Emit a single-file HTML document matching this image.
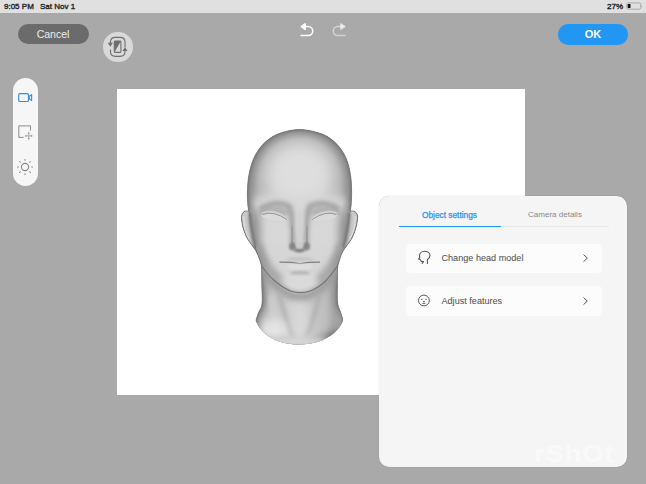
<!DOCTYPE html>
<html><head><meta charset="utf-8">
<style>
*{margin:0;padding:0;box-sizing:border-box}
html,body{width:646px;height:484px;overflow:hidden;background:#a9a9a9;font-family:"Liberation Sans",sans-serif}
.abs{position:absolute}
#status{left:0;top:0;width:646px;height:12.5px;background:#e0e0e0;font-size:8px;color:#222;-webkit-text-stroke:0.35px #222}
#cancel{left:17.5px;top:24px;width:71px;height:20px;border-radius:10px;background:#6b6b6b;color:#eee;font-size:10.5px;text-align:center;line-height:20px}
#ok{left:558px;top:24px;width:70px;height:20.5px;border-radius:10px;background:#2196f3;color:#fff;font-size:11px;text-align:center;line-height:20.5px;font-weight:bold}
#rot{left:103px;top:32px;width:29.5px;height:29.5px;border-radius:50%;background:#d9d9d9}
#tool{left:13px;top:78px;width:25px;height:108px;border-radius:12.5px;background:#f6f6f6}
#canvas{left:117px;top:89px;width:408px;height:306px;background:#fff}
#panel{left:379px;top:196px;width:247.5px;height:271px;border-radius:10px;background:#f5f5f5;box-shadow:0 0 1px rgba(0,0,0,0.35)}
.row{position:absolute;left:27px;width:195.5px;height:29.5px;background:#fcfcfc;border-radius:4px;font-size:9.1px;color:#4a4a4a}
</style></head><body>
<div id="status" class="abs">
  <span class="abs" style="left:4px;top:1.5px">9:05 PM</span>
  <span class="abs" style="left:40px;top:1.5px">Sat Nov 1</span>
  <span class="abs" style="left:607px;top:1.5px">27%</span>
</div>
<div id="cancel" class="abs">Cancel</div>
<div id="rot" class="abs"></div>
<div id="ok" class="abs">OK</div>
<div id="tool" class="abs"></div>
<div id="canvas" class="abs"></div>
<div id="panel" class="abs">
  <div class="abs" style="left:19.5px;top:13.5px;width:102px;text-align:center;font-size:8.3px;color:#2196f3;-webkit-text-stroke:0.25px #2196f3">Object settings</div>
  <div class="abs" style="left:124px;top:13.5px;width:104px;text-align:center;font-size:8px;color:#888">Camera details</div>
  <div class="abs" style="left:19.5px;top:29.5px;width:102px;height:1.5px;background:#2196f3"></div>
  <div class="abs" style="left:121.5px;top:30px;width:108px;height:1px;background:#e9e9e9"></div>
  <div class="row" style="top:47.5px"><span class="abs" style="left:35.5px;top:9.5px">Change head model</span></div>
  <div class="abs" style="left:155px;top:243px;font-size:28px;font-weight:bold;color:#fff;opacity:0.45;letter-spacing:0.5px;line-height:28px;overflow:hidden;width:92px;height:26px;transform:scaleY(0.85);transform-origin:0 100%">rShOt</div>
  <div class="row" style="top:90.3px"><span class="abs" style="left:35.5px;top:9.5px">Adjust features</span></div>
</div>

<svg class="abs" style="left:0;top:0" width="646" height="484" viewBox="0 0 646 484">
<defs>
 <clipPath id="hc"><path d="M 299.5 129.5 C 307.1 129.5 316.4 131.8 322.7 134.3 C 329.0 136.8 333.2 140.5 337.2 144.6 C 341.1 148.7 344.2 153.9 346.4 159.1 C 348.6 164.3 349.7 170.1 350.6 175.6 C 351.5 181.1 351.5 187.4 351.6 192.1 C 351.7 196.8 351.3 200.9 351.2 204.0 C 351.1 207.1 350.3 209.4 350.8 210.6 C 351.3 211.8 353.1 210.4 354.2 211.2 C 355.3 212.0 357.2 213.0 357.6 215.5 C 358.0 218.0 357.2 222.4 356.4 226.0 C 355.5 229.6 354.1 233.7 352.5 237.0 C 350.9 240.3 348.2 243.5 346.5 246.0 C 344.8 248.5 343.7 249.7 342.5 252.0 C 341.3 254.3 340.3 257.3 339.5 260.0 C 338.7 262.7 338.0 263.8 337.6 268.0 C 337.2 272.2 337.4 279.2 337.4 285.0 C 337.4 290.8 337.0 298.3 337.6 303.0 C 338.2 307.7 340.0 309.8 340.8 313.0 C 341.6 316.2 343.3 318.7 342.2 322.0 C 341.1 325.3 337.9 329.7 334.0 333.0 C 330.1 336.3 324.6 339.7 318.8 341.6 C 313.1 343.5 306.0 344.6 299.5 344.6 C 293.0 344.6 285.4 343.7 279.7 341.8 C 273.9 339.9 268.9 336.6 265.0 333.4 C 261.1 330.2 257.8 325.7 256.6 322.5 C 255.4 319.3 257.1 317.1 258.0 314.0 C 258.9 310.9 261.4 308.8 262.0 304.0 C 262.6 299.2 261.9 291.0 261.8 285.0 C 261.7 279.0 261.9 272.2 261.6 268.0 C 261.3 263.8 260.7 262.7 259.8 260.0 C 258.9 257.3 257.7 254.3 256.5 252.0 C 255.3 249.7 254.2 248.5 252.5 246.0 C 250.8 243.5 248.2 240.3 246.6 237.0 C 244.9 233.7 243.4 229.6 242.6 226.0 C 241.8 222.4 241.2 218.0 241.6 215.5 C 242.0 213.0 243.7 212.0 244.8 211.2 C 245.9 210.4 247.7 211.8 248.2 210.6 C 248.7 209.4 247.9 207.1 247.8 204.0 C 247.7 200.9 247.2 196.8 247.4 192.1 C 247.6 187.4 247.8 181.1 248.8 175.6 C 249.8 170.1 251.2 164.3 253.5 159.1 C 255.8 153.9 258.8 148.7 262.8 144.6 C 266.8 140.5 271.2 136.8 277.3 134.3 C 283.4 131.8 291.9 129.5 299.5 129.5 Z"/></clipPath>
 <filter id="b05" x="-50%" y="-50%" width="200%" height="200%"><feGaussianBlur stdDeviation="0.5"/></filter><filter id="b1" x="-50%" y="-50%" width="200%" height="200%"><feGaussianBlur stdDeviation="1"/></filter><filter id="b15" x="-50%" y="-50%" width="200%" height="200%"><feGaussianBlur stdDeviation="1.5"/></filter><filter id="b2" x="-50%" y="-50%" width="200%" height="200%"><feGaussianBlur stdDeviation="2"/></filter><filter id="b3" x="-50%" y="-50%" width="200%" height="200%"><feGaussianBlur stdDeviation="3"/></filter><filter id="b4" x="-50%" y="-50%" width="200%" height="200%"><feGaussianBlur stdDeviation="4"/></filter><filter id="b5" x="-50%" y="-50%" width="200%" height="200%"><feGaussianBlur stdDeviation="5"/></filter><filter id="b8" x="-50%" y="-50%" width="200%" height="200%"><feGaussianBlur stdDeviation="8"/></filter>
 <radialGradient id="skull" cx="0" cy="0" r="1" gradientUnits="userSpaceOnUse" gradientTransform="translate(299.5 182) scale(56 62)">
  <stop offset="0" stop-color="#dcdcdc"/><stop offset="0.4" stop-color="#d4d4d4"/><stop offset="0.7" stop-color="#bababa"/><stop offset="0.9" stop-color="#9a9a9a"/><stop offset="1" stop-color="#8a8a8a"/>
 </radialGradient>
 <linearGradient id="neckg" x1="256" y1="0" x2="343" y2="0" gradientUnits="userSpaceOnUse">
  <stop offset="0" stop-color="#b8b8b8"/><stop offset="0.2" stop-color="#c8c8c8"/><stop offset="0.5" stop-color="#d4d4d4"/><stop offset="0.8" stop-color="#bdbdbd"/><stop offset="1" stop-color="#9c9c9c"/>
 </linearGradient>
</defs>
<g clip-path="url(#hc)">
 <rect x="230" y="120" width="140" height="160" fill="url(#skull)"/>
 <rect x="250" y="262" width="100" height="90" fill="url(#neckg)"/>
 <path d="M 248.0 200.0 C 256.8 194.0 282.3 194.0 299.5 194.0 C 316.7 194.0 342.2 194.0 351.0 200.0 C 359.8 206.0 353.0 221.9 352.0 230.0 C 351.0 238.1 347.2 243.0 345.2 248.4 C 343.2 253.8 341.8 258.4 339.8 262.3 C 337.8 266.2 335.3 269.0 333.0 272.0 C 330.7 275.0 328.5 278.0 326.0 280.5 C 323.5 283.0 320.8 285.2 318.0 287.0 C 315.2 288.8 312.4 290.4 309.5 291.3 C 306.6 292.2 303.5 292.6 300.5 292.6 C 297.5 292.6 294.4 292.2 291.5 291.3 C 288.6 290.4 285.8 288.7 283.0 287.0 C 280.2 285.3 277.5 283.3 274.8 281.0 C 272.1 278.7 269.3 275.8 267.0 273.0 C 264.7 270.2 262.9 268.6 260.8 264.0 C 258.7 259.4 256.9 251.0 254.6 245.3 C 252.3 239.6 248.1 237.6 247.0 230.0 C 245.9 222.4 239.2 206.0 248.0 200.0 Z" fill="#d6d6d6" filter="url(#b5)"/>
 <!-- rim darkening -->
 <path d="M 299.5 129.5 C 307.1 129.5 316.4 131.8 322.7 134.3 C 329.0 136.8 333.2 140.5 337.2 144.6 C 341.1 148.7 344.2 153.9 346.4 159.1 C 348.6 164.3 349.7 170.1 350.6 175.6 C 351.5 181.1 351.5 187.4 351.6 192.1 C 351.7 196.8 351.3 200.9 351.2 204.0 C 351.1 207.1 350.3 209.4 350.8 210.6 C 351.3 211.8 353.1 210.4 354.2 211.2 C 355.3 212.0 357.2 213.0 357.6 215.5 C 358.0 218.0 357.2 222.4 356.4 226.0 C 355.5 229.6 354.1 233.7 352.5 237.0 C 350.9 240.3 348.2 243.5 346.5 246.0 C 344.8 248.5 343.7 249.7 342.5 252.0 C 341.3 254.3 340.3 257.3 339.5 260.0 C 338.7 262.7 338.0 263.8 337.6 268.0 C 337.2 272.2 337.4 279.2 337.4 285.0 C 337.4 290.8 337.0 298.3 337.6 303.0 C 338.2 307.7 340.0 309.8 340.8 313.0 C 341.6 316.2 343.3 318.7 342.2 322.0 C 341.1 325.3 337.9 329.7 334.0 333.0 C 330.1 336.3 324.6 339.7 318.8 341.6 C 313.1 343.5 306.0 344.6 299.5 344.6 C 293.0 344.6 285.4 343.7 279.7 341.8 C 273.9 339.9 268.9 336.6 265.0 333.4 C 261.1 330.2 257.8 325.7 256.6 322.5 C 255.4 319.3 257.1 317.1 258.0 314.0 C 258.9 310.9 261.4 308.8 262.0 304.0 C 262.6 299.2 261.9 291.0 261.8 285.0 C 261.7 279.0 261.9 272.2 261.6 268.0 C 261.3 263.8 260.7 262.7 259.8 260.0 C 258.9 257.3 257.7 254.3 256.5 252.0 C 255.3 249.7 254.2 248.5 252.5 246.0 C 250.8 243.5 248.2 240.3 246.6 237.0 C 244.9 233.7 243.4 229.6 242.6 226.0 C 241.8 222.4 241.2 218.0 241.6 215.5 C 242.0 213.0 243.7 212.0 244.8 211.2 C 245.9 210.4 247.7 211.8 248.2 210.6 C 248.7 209.4 247.9 207.1 247.8 204.0 C 247.7 200.9 247.2 196.8 247.4 192.1 C 247.6 187.4 247.8 181.1 248.8 175.6 C 249.8 170.1 251.2 164.3 253.5 159.1 C 255.8 153.9 258.8 148.7 262.8 144.6 C 266.8 140.5 271.2 136.8 277.3 134.3 C 283.4 131.8 291.9 129.5 299.5 129.5 Z" fill="none" stroke="#8c8c8c" stroke-width="9" filter="url(#b3)"/>
 <path d="M 299.5 129.5 C 307.1 129.5 316.4 131.8 322.7 134.3 C 329.0 136.8 333.2 140.5 337.2 144.6 C 341.1 148.7 344.2 153.9 346.4 159.1 C 348.6 164.3 349.7 170.1 350.6 175.6 C 351.5 181.1 351.5 187.4 351.6 192.1 C 351.7 196.8 351.3 200.9 351.2 204.0 C 351.1 207.1 350.3 209.4 350.8 210.6 C 351.3 211.8 353.1 210.4 354.2 211.2 C 355.3 212.0 357.2 213.0 357.6 215.5 C 358.0 218.0 357.2 222.4 356.4 226.0 C 355.5 229.6 354.1 233.7 352.5 237.0 C 350.9 240.3 348.2 243.5 346.5 246.0 C 344.8 248.5 343.7 249.7 342.5 252.0 C 341.3 254.3 340.3 257.3 339.5 260.0 C 338.7 262.7 338.0 263.8 337.6 268.0 C 337.2 272.2 337.4 279.2 337.4 285.0 C 337.4 290.8 337.0 298.3 337.6 303.0 C 338.2 307.7 340.0 309.8 340.8 313.0 C 341.6 316.2 343.3 318.7 342.2 322.0 C 341.1 325.3 337.9 329.7 334.0 333.0 C 330.1 336.3 324.6 339.7 318.8 341.6 C 313.1 343.5 306.0 344.6 299.5 344.6 C 293.0 344.6 285.4 343.7 279.7 341.8 C 273.9 339.9 268.9 336.6 265.0 333.4 C 261.1 330.2 257.8 325.7 256.6 322.5 C 255.4 319.3 257.1 317.1 258.0 314.0 C 258.9 310.9 261.4 308.8 262.0 304.0 C 262.6 299.2 261.9 291.0 261.8 285.0 C 261.7 279.0 261.9 272.2 261.6 268.0 C 261.3 263.8 260.7 262.7 259.8 260.0 C 258.9 257.3 257.7 254.3 256.5 252.0 C 255.3 249.7 254.2 248.5 252.5 246.0 C 250.8 243.5 248.2 240.3 246.6 237.0 C 244.9 233.7 243.4 229.6 242.6 226.0 C 241.8 222.4 241.2 218.0 241.6 215.5 C 242.0 213.0 243.7 212.0 244.8 211.2 C 245.9 210.4 247.7 211.8 248.2 210.6 C 248.7 209.4 247.9 207.1 247.8 204.0 C 247.7 200.9 247.2 196.8 247.4 192.1 C 247.6 187.4 247.8 181.1 248.8 175.6 C 249.8 170.1 251.2 164.3 253.5 159.1 C 255.8 153.9 258.8 148.7 262.8 144.6 C 266.8 140.5 271.2 136.8 277.3 134.3 C 283.4 131.8 291.9 129.5 299.5 129.5 Z" fill="none" stroke="#777" stroke-width="2.5" filter="url(#b1)"/>
 <ellipse cx="299.5" cy="172" rx="30" ry="26" fill="#dedede" filter="url(#b8)"/>
 <!-- brow arcs into nose sides -->
 <ellipse cx="274" cy="212" rx="15" ry="6" fill="#b2b2b2" filter="url(#b2)"/>
 <ellipse cx="325" cy="212" rx="15" ry="6" fill="#b2b2b2" filter="url(#b2)"/>
 <path d="M260 209 Q276 200 289 206 Q293 215 292.5 242" stroke="#a0a0a0" stroke-width="5" fill="none" filter="url(#b2)"/>
 <path d="M292.5 226 Q292.5 236 291.5 244" stroke="#949494" stroke-width="4" fill="none" filter="url(#b15)"/>
 <path d="M339 209 Q323 200 310 206 Q306 215 306.5 242" stroke="#a0a0a0" stroke-width="5" fill="none" filter="url(#b2)"/>
 <path d="M306.5 226 Q306.5 236 307.5 244" stroke="#949494" stroke-width="4" fill="none" filter="url(#b15)"/>
 <ellipse cx="299.5" cy="225" rx="4" ry="14" fill="#d2d2d2" filter="url(#b15)"/>
 <ellipse cx="276" cy="234" rx="11" ry="9" fill="#d8d8d8" filter="url(#b4)"/>
 <ellipse cx="323" cy="234" rx="11" ry="9" fill="#d8d8d8" filter="url(#b4)"/>
 <!-- face sides -->
 <ellipse cx="253" cy="232" rx="7" ry="24" fill="#8e8e8e" filter="url(#b4)"/>
 <ellipse cx="346" cy="232" rx="7" ry="24" fill="#8e8e8e" filter="url(#b4)"/>
 <!-- cheek hollow -->
 <path d="M258 244 Q264 266 281 281" stroke="#a2a2a2" stroke-width="7" fill="none" filter="url(#b3)"/>
 <path d="M341 244 Q335 266 318 281" stroke="#a2a2a2" stroke-width="7" fill="none" filter="url(#b3)"/>
 <!-- ears -->
 <path d="M 244.8 211.2 C 246.0 210.6 248.0 209.7 249.0 212.0 C 250.0 214.3 250.2 220.7 251.0 225.0 C 251.8 229.3 252.8 234.3 253.5 238.0 C 254.2 241.7 255.7 245.7 255.5 247.0 C 255.3 248.3 254.0 247.7 252.5 246.0 C 251.0 244.3 248.2 240.3 246.6 237.0 C 244.9 233.7 243.4 229.6 242.6 226.0 C 241.8 222.4 241.2 218.0 241.6 215.5 C 242.0 213.0 243.6 211.8 244.8 211.2 Z" fill="#c8c8c8"/>
 <path d="M 354.2 211.2 C 353.0 210.6 351.0 209.7 350.0 212.0 C 349.0 214.3 348.8 220.7 348.0 225.0 C 347.2 229.3 346.2 234.3 345.5 238.0 C 344.8 241.7 343.3 245.7 343.5 247.0 C 343.7 248.3 345.0 247.7 346.5 246.0 C 348.0 244.3 350.8 240.3 352.4 237.0 C 354.0 233.7 355.6 229.6 356.4 226.0 C 357.2 222.4 357.8 218.0 357.4 215.5 C 357.0 213.0 355.4 211.8 354.2 211.2 Z" fill="#c8c8c8"/>
 <path d="M249.8 213 Q250.5 230 255 247" stroke="#7a7a7a" stroke-width="3" fill="none" filter="url(#b1)"/>
 <path d="M349.2 213 Q348.5 230 344 247" stroke="#7a7a7a" stroke-width="3" fill="none" filter="url(#b1)"/>
 <path d="M243.5 216 Q243.5 228 249 240" stroke="#dadada" stroke-width="1.6" fill="none" filter="url(#b05)"/>
 <path d="M355.5 216 Q355.5 228 350 240" stroke="#dadada" stroke-width="1.6" fill="none" filter="url(#b05)"/>
 <path d="M 244.8 211.2 C 246.0 210.6 248.0 209.7 249.0 212.0 C 250.0 214.3 250.2 220.7 251.0 225.0 C 251.8 229.3 252.8 234.3 253.5 238.0 C 254.2 241.7 255.7 245.7 255.5 247.0 C 255.3 248.3 254.0 247.7 252.5 246.0 C 251.0 244.3 248.2 240.3 246.6 237.0 C 244.9 233.7 243.4 229.6 242.6 226.0 C 241.8 222.4 241.2 218.0 241.6 215.5 C 242.0 213.0 243.6 211.8 244.8 211.2 Z" fill="none" stroke="#7a7a7a" stroke-width="1" filter="url(#b05)"/>
 <path d="M 354.2 211.2 C 353.0 210.6 351.0 209.7 350.0 212.0 C 349.0 214.3 348.8 220.7 348.0 225.0 C 347.2 229.3 346.2 234.3 345.5 238.0 C 344.8 241.7 343.3 245.7 343.5 247.0 C 343.7 248.3 345.0 247.7 346.5 246.0 C 348.0 244.3 350.8 240.3 352.4 237.0 C 354.0 233.7 355.6 229.6 356.4 226.0 C 357.2 222.4 357.8 218.0 357.4 215.5 C 357.0 213.0 355.4 211.8 354.2 211.2 Z" fill="none" stroke="#7a7a7a" stroke-width="1" filter="url(#b05)"/>
 <!-- under-jaw neck shading -->
 <path d="M 254.6 245.3 C 255.6 248.4 258.7 259.4 260.8 264.0 C 262.9 268.6 264.7 270.2 267.0 273.0 C 269.3 275.8 272.1 278.7 274.8 281.0 C 277.5 283.3 280.2 285.3 283.0 287.0 C 285.8 288.7 288.6 290.4 291.5 291.3 C 294.4 292.2 297.5 292.6 300.5 292.6 C 303.5 292.6 306.6 292.2 309.5 291.3 C 312.4 290.4 315.2 288.8 318.0 287.0 C 320.8 285.2 323.5 283.0 326.0 280.5 C 328.5 278.0 330.7 275.0 333.0 272.0 C 335.3 269.0 337.8 266.2 339.8 262.3 C 341.8 258.4 344.3 250.7 345.2 248.4 " stroke="#9a9a9a" stroke-width="8" fill="none" transform="translate(0 4)" filter="url(#b3)"/>
 <path d="M262 268 L262 300" stroke="#909090" stroke-width="5.5" fill="none" filter="url(#b2)"/>
 <path d="M337 268 L337 304" stroke="#909090" stroke-width="6" fill="none" filter="url(#b2)"/>
 <!-- neck grooves/muscles -->
 <path d="M279 294 Q285 318 294 340" stroke="#aeaeae" stroke-width="4" fill="none" filter="url(#b2)"/>
 <path d="M320 294 Q314 318 305 340" stroke="#aeaeae" stroke-width="4" fill="none" filter="url(#b2)"/>
 <path d="M270 296 Q272 312 276 326" stroke="#cecece" stroke-width="4" fill="none" filter="url(#b2)"/>
 <ellipse cx="300" cy="322" rx="7" ry="17" fill="#d8d8d8" filter="url(#b4)"/>
 <ellipse cx="273" cy="330" rx="15" ry="11" fill="#e4e4e4" filter="url(#b4)"/>
 <ellipse cx="296" cy="342" rx="34" ry="6" fill="#d8d8d8" filter="url(#b3)"/>
 <ellipse cx="338" cy="322" rx="5" ry="10" fill="#a4a4a4" filter="url(#b3)"/>
 <!-- chin -->
 <ellipse cx="300" cy="281" rx="14" ry="8" fill="#dcdcdc" filter="url(#b3)"/>
 <!-- jaw line dark -->
 <path d="M 254.6 245.3 C 255.6 248.4 258.7 259.4 260.8 264.0 C 262.9 268.6 264.7 270.2 267.0 273.0 C 269.3 275.8 272.1 278.7 274.8 281.0 C 277.5 283.3 280.2 285.3 283.0 287.0 C 285.8 288.7 288.6 290.4 291.5 291.3 C 294.4 292.2 297.5 292.6 300.5 292.6 C 303.5 292.6 306.6 292.2 309.5 291.3 C 312.4 290.4 315.2 288.8 318.0 287.0 C 320.8 285.2 323.5 283.0 326.0 280.5 C 328.5 278.0 330.7 275.0 333.0 272.0 C 335.3 269.0 337.8 266.2 339.8 262.3 C 341.8 258.4 344.3 250.7 345.2 248.4 " stroke="#747474" stroke-width="1.1" fill="none" filter="url(#b05)"/>
</g>
<!-- eyes -->
<path d="M 261.4 215.2 C 261.5 214.2 263.9 213.2 266.0 212.6 C 268.1 212.0 271.2 211.7 273.7 211.8 C 276.2 212.0 278.8 212.3 281.0 213.5 C 283.2 214.7 286.9 218.0 287.0 219.2 C 287.1 220.4 284.0 220.3 281.5 220.6 C 279.0 220.9 274.7 221.1 272.0 220.8 C 269.3 220.5 267.3 219.7 265.5 218.8 C 263.7 217.9 261.3 216.2 261.4 215.2 Z" fill="#dadada" filter="url(#b05)"/>
<path d="M 337.6 215.2 C 337.5 214.2 335.1 213.2 333.0 212.6 C 330.9 212.0 327.8 211.7 325.3 211.8 C 322.8 212.0 320.2 212.3 318.0 213.5 C 315.8 214.7 312.1 218.0 312.0 219.2 C 311.9 220.4 315.0 220.3 317.5 220.6 C 320.0 220.9 324.3 221.1 327.0 220.8 C 329.7 220.5 331.7 219.7 333.5 218.8 C 335.3 217.9 337.7 216.2 337.6 215.2 Z" fill="#dadada" filter="url(#b05)"/>
<path d="M262 213.2 Q273 207.8 286.5 218" stroke="#cfcfcf" stroke-width="1.4" fill="none"/>
<path d="M337 213.2 Q326 207.8 312.5 218" stroke="#cfcfcf" stroke-width="1.4" fill="none"/>
<path d="M262.5 214.6 Q273 210 287 219.6" stroke="#8a8a8a" stroke-width="0.9" fill="none"/>
<path d="M336.5 214.6 Q326 210 312 219.6" stroke="#8a8a8a" stroke-width="0.9" fill="none"/>
<!-- nose bottom -->
<ellipse cx="292.8" cy="246.3" rx="3.8" ry="4.2" fill="#848484" filter="url(#b1)"/>
<ellipse cx="306.2" cy="246.3" rx="3.8" ry="4.2" fill="#848484" filter="url(#b1)"/>
<ellipse cx="299.5" cy="250.4" rx="5.5" ry="2" fill="#7c7c7c" filter="url(#b1)"/>
<ellipse cx="299.5" cy="244" rx="4" ry="3.8" fill="#cccccc" filter="url(#b1)"/>
<!-- mouth -->
<ellipse cx="300" cy="259" rx="14" ry="2.2" fill="#c6c6c6" filter="url(#b1)"/>
<path d="M279.5 262.2 Q290 262 300 263.6 Q310 262 320 262.2" stroke="#7c7c7c" stroke-width="1.3" fill="none" filter="url(#b05)"/>
<ellipse cx="300" cy="267" rx="12.5" ry="3.2" fill="#dedede" filter="url(#b1)"/>
<ellipse cx="300" cy="273" rx="10" ry="2" fill="#b0b0b0" filter="url(#b15)"/>
<ellipse cx="300" cy="281.5" rx="11" ry="6" fill="#dadada" filter="url(#b2)"/>
<!-- outline -->
<clipPath id="topc"><rect x="0" y="0" width="646" height="322"/></clipPath><path d="M 299.5 129.5 C 307.1 129.5 316.4 131.8 322.7 134.3 C 329.0 136.8 333.2 140.5 337.2 144.6 C 341.1 148.7 344.2 153.9 346.4 159.1 C 348.6 164.3 349.7 170.1 350.6 175.6 C 351.5 181.1 351.5 187.4 351.6 192.1 C 351.7 196.8 351.3 200.9 351.2 204.0 C 351.1 207.1 350.3 209.4 350.8 210.6 C 351.3 211.8 353.1 210.4 354.2 211.2 C 355.3 212.0 357.2 213.0 357.6 215.5 C 358.0 218.0 357.2 222.4 356.4 226.0 C 355.5 229.6 354.1 233.7 352.5 237.0 C 350.9 240.3 348.2 243.5 346.5 246.0 C 344.8 248.5 343.7 249.7 342.5 252.0 C 341.3 254.3 340.3 257.3 339.5 260.0 C 338.7 262.7 338.0 263.8 337.6 268.0 C 337.2 272.2 337.4 279.2 337.4 285.0 C 337.4 290.8 337.0 298.3 337.6 303.0 C 338.2 307.7 340.0 309.8 340.8 313.0 C 341.6 316.2 343.3 318.7 342.2 322.0 C 341.1 325.3 337.9 329.7 334.0 333.0 C 330.1 336.3 324.6 339.7 318.8 341.6 C 313.1 343.5 306.0 344.6 299.5 344.6 C 293.0 344.6 285.4 343.7 279.7 341.8 C 273.9 339.9 268.9 336.6 265.0 333.4 C 261.1 330.2 257.8 325.7 256.6 322.5 C 255.4 319.3 257.1 317.1 258.0 314.0 C 258.9 310.9 261.4 308.8 262.0 304.0 C 262.6 299.2 261.9 291.0 261.8 285.0 C 261.7 279.0 261.9 272.2 261.6 268.0 C 261.3 263.8 260.7 262.7 259.8 260.0 C 258.9 257.3 257.7 254.3 256.5 252.0 C 255.3 249.7 254.2 248.5 252.5 246.0 C 250.8 243.5 248.2 240.3 246.6 237.0 C 244.9 233.7 243.4 229.6 242.6 226.0 C 241.8 222.4 241.2 218.0 241.6 215.5 C 242.0 213.0 243.7 212.0 244.8 211.2 C 245.9 210.4 247.7 211.8 248.2 210.6 C 248.7 209.4 247.9 207.1 247.8 204.0 C 247.7 200.9 247.2 196.8 247.4 192.1 C 247.6 187.4 247.8 181.1 248.8 175.6 C 249.8 170.1 251.2 164.3 253.5 159.1 C 255.8 153.9 258.8 148.7 262.8 144.6 C 266.8 140.5 271.2 136.8 277.3 134.3 C 283.4 131.8 291.9 129.5 299.5 129.5 Z" fill="none" stroke="#707070" stroke-width="0.7" clip-path="url(#topc)"/>
</svg>


<svg class="abs" style="left:0;top:0" width="646" height="484" viewBox="0 0 646 484">
 <!-- battery -->
 <rect x="626.8" y="2.9" width="14" height="6.3" rx="1.6" fill="none" stroke="#9a9a9a" stroke-width="0.8"/>
 <rect x="627.7" y="4.1" width="2.8" height="4" rx="0.5" fill="#111"/>
 <path d="M641.4 5 Q642.9 6.2 641.4 7.4 Z" fill="#9a9a9a"/>
 <!-- rotate icon -->
 <g transform="translate(100 30)" stroke="#6e6e6e" fill="none" stroke-width="1.1">
  <path d="M10.5 13.8 V12 C10.5 9 12.5 7.4 15.5 7.4 H20 C23 7.4 25 9 25 12 V17.5"/>
  <path d="M10.5 19.5 V21.8 C10.5 24.8 12.5 26.4 15.5 26.4 H20 C23 26.4 25 24.8 25 21.8 V20.8"/>
  <rect x="14.3" y="11" width="6.6" height="11.4" rx="0.8"/>
  <path d="M14.3 11 H20.9 L14.3 22.4 Z" fill="#6e6e6e" stroke="none"/>
  <path d="M7.7 12.8 H12.9 L10.3 16.8 Z" fill="#6e6e6e" stroke="none"/>
  <path d="M22.4 21 H27.6 L25 17.2 Z" fill="#6e6e6e" stroke="none"/>
 </g>
 <!-- undo -->
 <g stroke="#fff" fill="none" stroke-width="1.5" stroke-linecap="round" stroke-linejoin="round">
  <path d="M301 35.5 H308.3 A4.45 4.45 0 0 0 308.3 26.6 H301.6"/>
  <path d="M305.2 23.8 L301.4 26.6 L305.2 29.4 Z" fill="#fff"/>
 </g>
 <g stroke="#fff" stroke-opacity="0.5" fill="none" stroke-width="1.5" stroke-linecap="round" stroke-linejoin="round">
  <path d="M345 35.5 H337.7 A4.45 4.45 0 0 1 337.7 26.6 H344.6"/>
  <path d="M340.8 23.8 L344.6 26.6 L340.8 29.4 Z" fill="#fff" fill-opacity="0.5"/>
 </g>
 <!-- camera icon -->
 <g stroke="#2f8fe6" fill="none" stroke-width="1.15" stroke-linejoin="round">
  <rect x="18.7" y="93.6" width="9.8" height="7.9" rx="1.3"/>
  <path d="M29.2 96.3 L31.6 94.6 V100.6 L29.2 98.9 Z"/>
 </g>
 <!-- transform icon -->
 <g stroke="#808080" fill="none" stroke-width="0.9" stroke-linejoin="miter">
  <path d="M23.6 137.4 H18.8 V125.9 H30.5 V130.6"/>
 </g>
 <g stroke="#808080" stroke-width="0.6" fill="none">
  <path d="M25.6 135.9 H32 M28.8 132.7 V139.1"/>
 </g>
 <g fill="#808080">
  <path d="M28.8 132 L27.7 133.5 H29.9 Z"/><path d="M28.8 139.8 L27.7 138.3 H29.9 Z"/>
  <path d="M24.9 135.9 L26.4 134.8 V137 Z"/><path d="M32.7 135.9 L31.2 134.8 V137 Z"/>
 </g>
 <!-- sun icon -->
 <g stroke="#858585" fill="none" stroke-width="1.1">
  <circle cx="25" cy="167" r="3.6"/>
 </g>
 <g stroke="#858585" stroke-width="1.1" stroke-linecap="round">
  <path d="M25 159.5 V160.3 M25 173.7 V174.5 M17.5 167 H18.3 M31.7 167 H32.5 M19.7 161.7 L20.2 162.2 M29.8 171.8 L30.3 172.3 M19.7 172.3 L20.2 171.8 M29.8 162.2 L30.3 161.7"/>
 </g>
 <!-- head profile icon -->
 <path d="M427.4 264 V259.5 C429 258.5 430 257 430 255.5 C430 252.8 427.5 251.2 424.6 251.2 C421.5 251.2 419.5 253.5 419.5 256 L419.7 257.8 L418.5 258.8 L420.7 260 L421.2 261.4 L423.5 261.6 L422.1 263.8" fill="none" stroke="#555" stroke-width="1.1" stroke-linejoin="round"/>
 <!-- face icon -->
 <circle cx="423.9" cy="300.5" r="5.4" fill="none" stroke="#555" stroke-width="1"/>
 <g stroke="#555" stroke-width="0.9" stroke-linecap="round">
  <path d="M421.3 299.3 H422.1 M425.6 299.3 H426.4 M423.3 301.6 H424.5 M422.8 303.4 H425"/>
 </g>
 <!-- chevrons -->
 <g stroke="#555" fill="none" stroke-width="1" stroke-linecap="round" stroke-linejoin="round">
  <path d="M583.8 254.8 L587.3 258.1 L583.8 261.4"/>
  <path d="M583.8 297.8 L587.3 301.1 L583.8 304.4"/>
 </g>
</svg>

</body></html>
